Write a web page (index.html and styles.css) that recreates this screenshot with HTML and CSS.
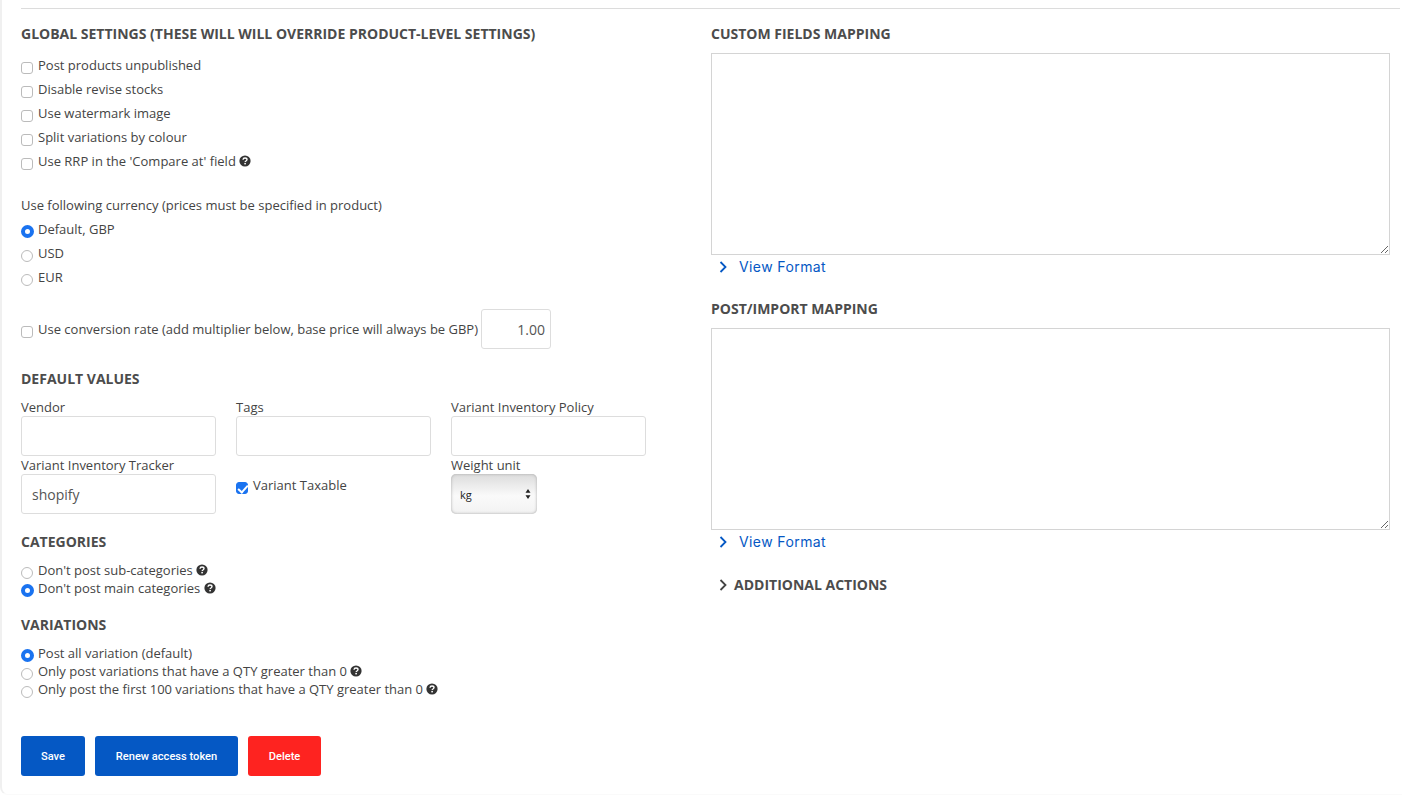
FILE: index.html
```html
<!DOCTYPE html>
<html lang="en">
<head>
<meta charset="utf-8">
<title>Settings</title>
<link rel="stylesheet" href="styles.css">
</head>
<body>
<svg class="defs" width="0" height="0" aria-hidden="true">
  <symbol id="help" viewBox="0 0 12 12">
    <circle cx="6" cy="6" r="5.600" fill="#333"/>
    <path d="M4 4.700C4.100 3.500 5 3 6 3c1.200 0 2 .6 2 1.600 0 .8-.5 1.100-1 1.400-.5.3-.8.5-.8 1" fill="none" stroke="#fff" stroke-width="1.400"/>
    <rect x="5.300" y="7.900" width="1.600" height="1.500" fill="#fff"/>
  </symbol>
</svg>
<main class="card">
  <div class="columns">
    <section class="left">
      <h3 class="heading">GLOBAL SETTINGS (THESE WILL WILL OVERRIDE PRODUCT-LEVEL SETTINGS)</h3>
      <div class="list wide">
        <label class="opt"><input type="checkbox" class="box">Post products unpublished</label>
        <label class="opt"><input type="checkbox" class="box">Disable revise stocks</label>
        <label class="opt"><input type="checkbox" class="box">Use watermark image</label>
        <label class="opt"><input type="checkbox" class="box">Split variations by colour</label>
        <label class="opt"><input type="checkbox" class="box">Use RRP in the 'Compare at' field <svg class="help"><use href="#help"/></svg></label>
      </div>
      <div class="list wide currency">
        <div class="opt">Use following currency (prices must be specified in product)</div>
        <label class="opt"><input type="radio" class="dot" name="cur" checked>Default, GBP</label>
        <label class="opt"><input type="radio" class="dot" name="cur">USD</label>
        <label class="opt"><input type="radio" class="dot" name="cur">EUR</label>
      </div>
      <div class="conversion">
        <label class="opt"><input type="checkbox" class="box">Use conversion rate (add multiplier below, base price will always be GBP)</label>
        <input class="field rate" type="text" value="1.00">
      </div>
      <h3 class="heading defaults">DEFAULT VALUES</h3>
      <div class="grid">
        <label class="cell"><span class="cap">Vendor</span><input class="field" type="text"></label>
        <label class="cell"><span class="cap">Tags</span><input class="field" type="text"></label>
        <label class="cell"><span class="cap">Variant Inventory Policy</span><input class="field" type="text"></label>
        <label class="cell"><span class="cap">Variant Inventory Tracker</span><input class="field" type="text" value="shopify"></label>
        <label class="opt taxable"><input type="checkbox" class="box" checked>Variant Taxable</label>
        <label class="cell"><span class="cap">Weight unit</span>
          <span class="select-wrap">
            <select class="select"><option>kg</option><option>lb</option></select>
            <svg class="arrows" width="6" height="10" viewBox="0 0 6 10"><path d="M3 0l2.500 3.700h-5zM3 10L.5 6.300h5z" fill="#222"/></svg>
          </span>
        </label>
      </div>
      <h3 class="heading categories">CATEGORIES</h3>
      <div class="list tight">
        <label class="opt"><input type="radio" class="dot" name="cat">Don't post sub-categories <svg class="help"><use href="#help"/></svg></label>
        <label class="opt"><input type="radio" class="dot" name="cat" checked>Don't post main categories <svg class="help"><use href="#help"/></svg></label>
      </div>
      <h3 class="heading variations">VARIATIONS</h3>
      <div class="list tight">
        <label class="opt"><input type="radio" class="dot" name="var" checked>Post all variation (default)</label>
        <label class="opt"><input type="radio" class="dot" name="var">Only post variations that have a QTY greater than 0 <svg class="help"><use href="#help"/></svg></label>
        <label class="opt"><input type="radio" class="dot" name="var">Only post the first 100 variations that have a QTY greater than 0 <svg class="help"><use href="#help"/></svg></label>
      </div>
      <div class="actions">
        <button class="btn save" type="button">Save</button>
        <button class="btn renew" type="button">Renew access token</button>
        <button class="btn delete" type="button">Delete</button>
      </div>
    </section>
    <section class="right">
      <h3 class="heading">CUSTOM FIELDS MAPPING</h3>
      <textarea class="area"></textarea>
      <a class="format" href="#"><svg class="chev" width="8" height="12" viewBox="0 0 8 12"><path d="M1.500 1l5 5-5 5" fill="none" stroke="currentColor" stroke-width="1.800"/></svg>View Format</a>
      <h3 class="heading mapping">POST/IMPORT MAPPING</h3>
      <textarea class="area"></textarea>
      <a class="format" href="#"><svg class="chev" width="8" height="12" viewBox="0 0 8 12"><path d="M1.500 1l5 5-5 5" fill="none" stroke="currentColor" stroke-width="1.800"/></svg>View Format</a>
      <h3 class="heading additional"><svg class="chev dark" width="8" height="12" viewBox="0 0 8 12"><path d="M1.500 1l5 5-5 5" fill="none" stroke="currentColor" stroke-width="1.800"/></svg>ADDITIONAL ACTIONS</h3>
    </section>
  </div>
</main>
</body>
</html>
```
FILE: styles.css
```css
* { box-sizing: border-box; }
html, body { margin: 0; padding: 0; background: #fff; }
body {
  height: 796px;
  overflow: hidden;
  font-family: "Open Sans", "Noto Sans", sans-serif;
  font-size: 13px;
  color: #444;
}
.defs { position: absolute; }
.card {
  height: 795px;
  padding: 8px 2px 0 19px;
  border-left: 2px solid #f0f0f0;
  border-bottom: 1px solid #fafafa;
  border-bottom-left-radius: 8px;
}
.columns {
  display: grid;
  grid-template-columns: 690px 679px;
  border-top: 1px solid #dcdcdc;
  padding-top: 15px;
}
.left, .right { display: flex; flex-direction: column; align-items: flex-start; }
.heading {
  margin: 0;
  font-size: 14px;
  line-height: 20px;
  font-weight: 700;
  color: #4c4c4c;
}
.list { display: flex; flex-direction: column; margin-top: 9px; }
.opt { display: flex; align-items: center; white-space: pre; color: #444; }
.wide .opt { height: 24px; }
.tight .opt { height: 18px; }
.currency { margin-top: 20px; }
.box, .dot {
  appearance: none;
  flex: none;
  width: 12px;
  height: 12px;
  margin: 5px 5px 0 0;
  background: #fff;
  border: 1px solid #bbb;
}
.box { border-radius: 3px; }
.dot { border-radius: 50%; }
.dot:checked {
  width: 13px;
  height: 13px;
  margin-right: 4px;
  background: #fff;
  border: 4px solid #1a73f0;
}
.box:checked {
  background: #1a73f0;
  border-color: #1a73f0;
  position: relative;
}
.box:checked::after {
  content: "";
  position: absolute;
  left: 3px;
  top: 0;
  width: 4px;
  height: 8px;
  border: solid #fff;
  border-width: 0 2px 2px 0;
  transform: rotate(42deg);
}
.help { width: 12px; height: 12px; margin-left: 0; }
.conversion { display: flex; align-items: center; margin-top: 20px; }
.field {
  display: block;
  width: 195px;
  height: 40px;
  padding: 0 10px;
  border: 1px solid #ddd;
  border-radius: 3px;
  background: #fff;
  font: 14px "Open Sans", sans-serif;
  color: #555;
}
.rate { width: 70px; margin-left: 3px; padding-right: 5px; text-align: right; }
.defaults { margin-top: 20px; }
.grid {
  display: grid;
  grid-template-columns: repeat(3, 195px);
  column-gap: 20px;
  margin-top: 9px;
}
.cell { display: flex; flex-direction: column; align-items: flex-start; }
.cap { line-height: 18px; white-space: nowrap; color: #444; }
.taxable { align-self: start; height: 22px; margin-top: 18px; }
.select-wrap { position: relative; display: block; }
.select {
  appearance: none;
  display: block;
  width: 86px;
  height: 40px;
  padding: 0 0 0 9px;
  border: 0;
  border-radius: 5px;
  background: linear-gradient(#dcdcdc, #fafafa 55%, #f2f2f2);
  box-shadow: inset 0 0 3px #a8a8a8;
  font: 11px "Open Sans", sans-serif;
  color: #222;
}
.arrows { position: absolute; right: 6px; top: 15px; }
.categories { margin-top: 18px; }
.tight { margin-top: 9px; }
.variations { margin-top: 18px; }
.actions { display: flex; gap: 10px; margin-top: 38px; }
.btn {
  height: 40px;
  padding: 0;
  border: 0;
  border-radius: 3px;
  color: #fff;
  font: 500 11.100px Roboto, sans-serif;
  background: #0558c4;
}
.save { width: 64px; }
.renew { width: 143px; }
.delete { width: 73px; background: #fe2320; }
.area {
  display: block;
  width: 679px;
  height: 202px;
  margin: 9px 0 0;
  border: 1px solid #d4d4d4;
  background: #fff;
  padding: 8px;
}
.format {
  display: flex;
  align-items: center;
  height: 24px;
  padding-bottom: 1px;
  color: #0558c4;
  text-decoration: none;
  font: 14px Inter, sans-serif;
  letter-spacing: .4px;
}
.chev { margin: 0 12px 0 8px; color: #0558c4; }
.dark { margin-right: 7px; color: #444; }
.mapping { margin-top: 20px; }
.additional { display: flex; align-items: center; margin-top: 21px; }
```
